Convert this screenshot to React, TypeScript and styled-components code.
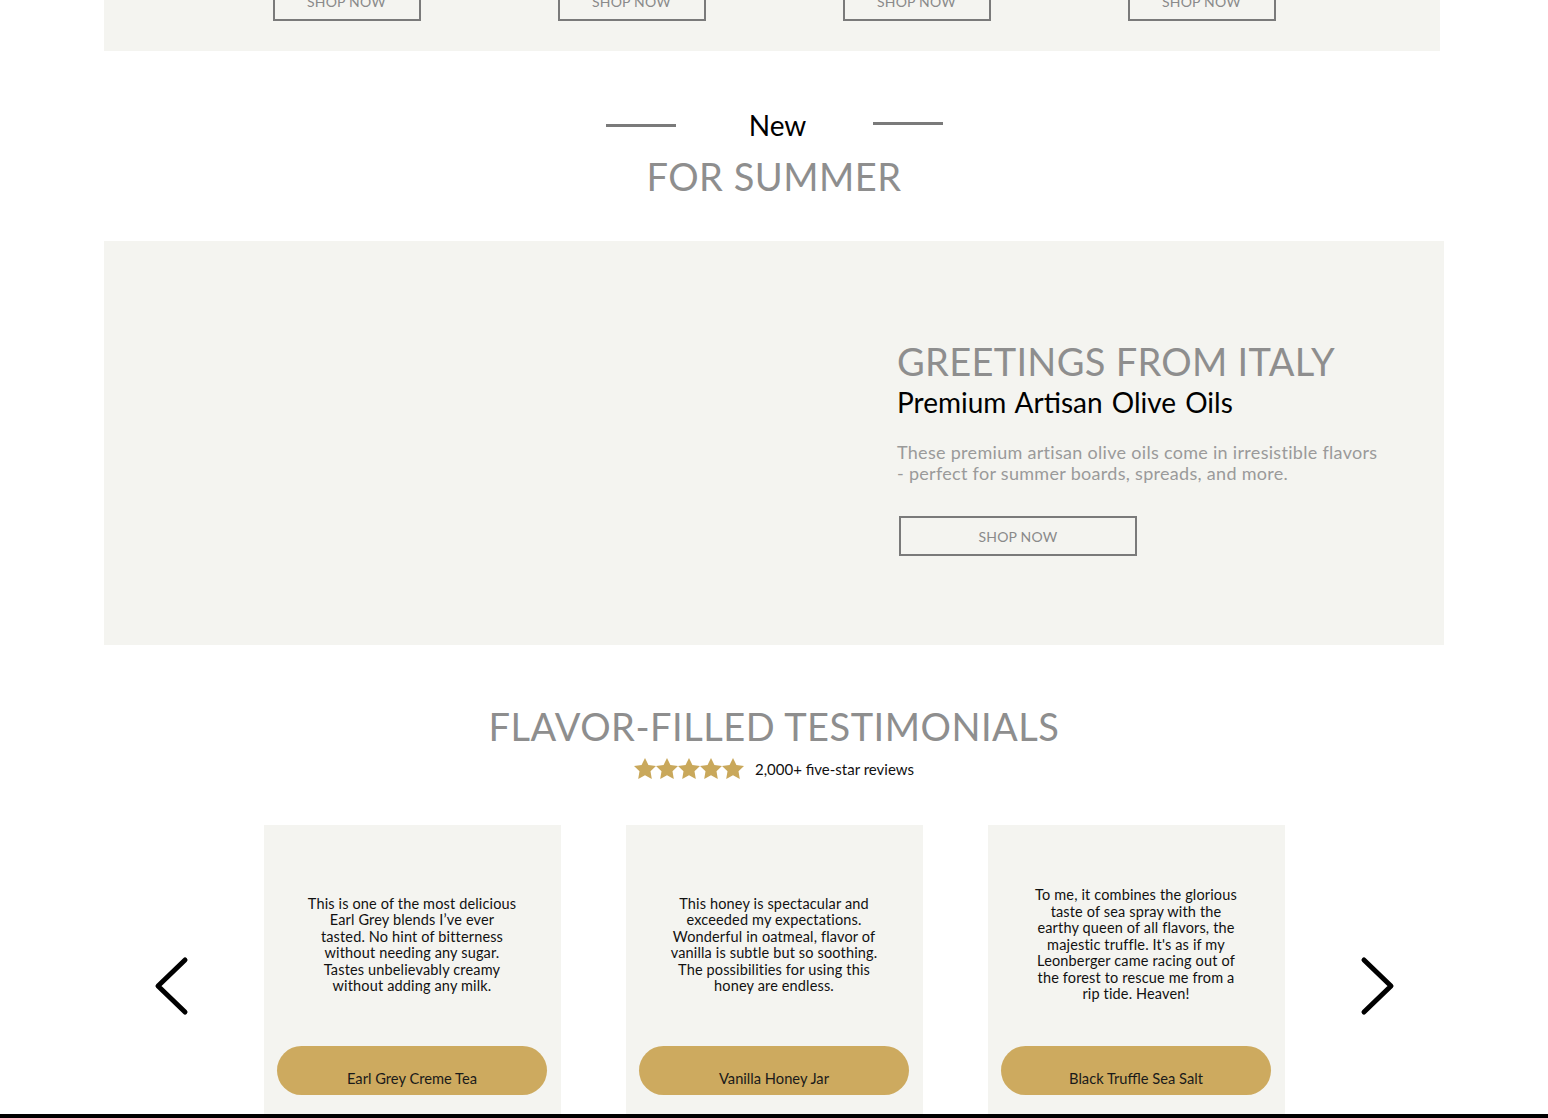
import styled, { createGlobalStyle } from "styled-components";

const GlobalStyle = createGlobalStyle`
  body {
    margin: 0;
    background: #ffffff;
    font-family: Lato, "Open Sans", sans-serif;
  }
`;

const Page = styled.div`
  width: 1548px;
  display: flex;
  flex-direction: column;
`;

const Faixa = styled.section`
  margin: 0 108px 0 104px;
  height: 51px;
  background: #f4f4f0;
  overflow: hidden;
  display: grid;
  grid-template-columns: repeat(4, 285px);
  justify-items: center;
  align-items: start;
  padding-left: 100px;
`;

const BotaoContorno = styled.button<{ $largura: number }>`
  width: ${(p) => p.$largura}px;
  height: 40px;
  background: transparent;
  border: 2px solid #7a7a7a;
  color: #8a8a8a;
  font-family: Lato, sans-serif;
  font-size: 14px;
  letter-spacing: 0.2px;
  cursor: pointer;
  padding: 0;
`;

const BotaoFaixa = styled(BotaoContorno)`
  margin-top: -19px;
`;

const Cabecalho = styled.div`
  margin-top: 57px;
  display: flex;
  flex-direction: column;
  align-items: center;
`;

const LinhaNovo = styled.div`
  display: flex;
  align-items: center;
  margin-left: 1px;
`;

const Traco = styled.span<{ $sobe?: boolean }>`
  width: 70px;
  height: 3px;
  background: #7a7a7a;
  transform: translateY(${(p) => (p.$sobe ? "-2px" : "0")});
`;

const Novo = styled.span`
  margin: 0 67px 0 73px;
  font-size: 28px;
  line-height: 34px;
  color: #000;
`;

const TituloCinza = styled.h2<{ $topo: number }>`
  margin: ${(p) => p.$topo}px 0 0 0;
  font-weight: 400;
  font-size: 38px;
  line-height: 46px;
  color: #8e8e8e;
  letter-spacing: 0.5px;
`;

const Banner = styled.section`
  margin: 42px 104px 0 104px;
  height: 404px;
  background: #f4f4f0;
  display: grid;
  grid-template-columns: 793px 1fr;
`;

const BannerTexto = styled.div`
  padding-top: 98px;
  display: flex;
  flex-direction: column;
  align-items: flex-start;
`;

const BannerTitulo = styled.h3`
  margin: 0;
  font-weight: 400;
  font-size: 38px;
  line-height: 44px;
  color: #8e8e8e;
  letter-spacing: 0.3px;
`;

const BannerSub = styled.h4`
  margin: 3px 0 0 0;
  font-weight: 400;
  font-size: 28px;
  line-height: 32px;
  color: #000;
  word-spacing: 2px;
`;

const BannerDesc = styled.p`
  margin: 24px 0 0 0;
  font-size: 18px;
  line-height: 21px;
  letter-spacing: 0.3px;
  color: #9a9a9a;
  width: 488px;
`;

const BannerBotao = styled(BotaoContorno)`
  margin: 32px 0 0 2px;
`;

const Depoimentos = styled.section`
  margin-top: 58px;
  display: flex;
  flex-direction: column;
  align-items: center;
`;

const Avaliacao = styled.div`
  margin-top: 9px;
  display: flex;
  align-items: center;
  gap: 11px;
  font-size: 15px;
  color: #111;
`;

const Estrelas = styled.div`
  display: flex;
`;

const Carrossel = styled.div`
  margin-top: 45px;
  display: flex;
  align-items: flex-start;
  gap: 75px;
`;

const Seta = styled.button`
  margin-top: 131px;
  background: none;
  border: 0;
  padding: 0;
  cursor: pointer;
  display: flex;
`;

const Cartoes = styled.div`
  display: flex;
  gap: 65px;
`;

const Cartao = styled.div`
  width: 297px;
  height: 289px;
  background: #f4f4f0;
  display: flex;
  flex-direction: column;
  align-items: center;
`;

const CartaoTexto = styled.p`
  margin: 20px 0 0 0;
  height: 200px;
  display: flex;
  align-items: center;
  text-align: center;
  font-size: 14.5px;
  line-height: 16.5px;
  letter-spacing: 0.15px;
  color: #111;
`;

const Pilula = styled.button`
  margin-top: 1px;
  width: 270px;
  height: 49px;
  border: 0;
  border-radius: 25px;
  background: #cdaa5f;
  color: #1a1a1a;
  font-family: Lato, sans-serif;
  font-size: 14.7px;
  line-height: 16.5px;
  padding: 24px 0 0 0;
  box-sizing: border-box;
  display: flex;
  justify-content: center;
  align-items: flex-start;
  cursor: pointer;
`;

const Rodape = styled.footer`
  height: 300px;
  background: #000;
`;

const Estrela = () => (
  <svg width="22" height="22" viewBox="2 2 20 20">
    <polygon
      fill="#c9a85b"
      points="12,2 15.09,8.26 22,9.27 17,14.14 18.18,21.02 12,17.77 5.82,21.02 7,14.14 2,9.27 8.91,8.26"
    />
  </svg>
);

const Chevron = ({ direita }: { direita?: boolean }) => (
  <svg width="36" height="60" viewBox="0 0 36 60">
    <path
      d={direita ? "M4 4 L31 30 L4 56" : "M32 4 L5 30 L32 56"}
      fill="none"
      stroke="#000"
      strokeWidth="5"
      strokeLinecap="round"
      strokeLinejoin="round"
    />
  </svg>
);

const depoimentos = [
  {
    linhas: [
      "This is one of the most delicious",
      "Earl Grey blends I’ve ever",
      "tasted. No hint of bitterness",
      "without needing any sugar.",
      "Tastes unbelievably creamy",
      "without adding any milk.",
    ],
    produto: "Earl Grey Creme Tea",
  },
  {
    linhas: [
      "This honey is spectacular and",
      "exceeded my expectations.",
      "Wonderful in oatmeal, flavor of",
      "vanilla is subtle but so soothing.",
      "The possibilities for using this",
      "honey are endless.",
    ],
    produto: "Vanilla Honey Jar",
  },
  {
    linhas: [
      "To me, it combines the glorious",
      "taste of sea spray with the",
      "earthy queen of all flavors, the",
      "majestic truffle. It's as if my",
      "Leonberger came racing out of",
      "the forest to rescue me from a",
      "rip tide. Heaven!",
    ],
    produto: "Black Truffle Sea Salt",
  },
];

export default function App() {
  return (
    <Page>
      <GlobalStyle />
      <Faixa>
        {[0, 1, 2, 3].map((i) => (
          <BotaoFaixa key={i} $largura={148}>
            SHOP NOW
          </BotaoFaixa>
        ))}
      </Faixa>

      <Cabecalho>
        <LinhaNovo>
          <Traco />
          <Novo>New</Novo>
          <Traco $sobe />
        </LinhaNovo>
        <TituloCinza $topo={11}>FOR SUMMER</TituloCinza>
      </Cabecalho>

      <Banner>
        <div />
        <BannerTexto>
          <BannerTitulo>GREETINGS FROM ITALY</BannerTitulo>
          <BannerSub>Premium Artisan Olive Oils</BannerSub>
          <BannerDesc>
            These premium artisan olive oils come in irresistible flavors - perfect for summer
            boards, spreads, and more.
          </BannerDesc>
          <BannerBotao $largura={238}>SHOP NOW</BannerBotao>
        </BannerTexto>
      </Banner>

      <Depoimentos>
        <TituloCinza $topo={0}>FLAVOR-FILLED TESTIMONIALS</TituloCinza>
        <Avaliacao>
          <Estrelas>
            {[0, 1, 2, 3, 4].map((i) => (
              <Estrela key={i} />
            ))}
          </Estrelas>
          <span>2,000+ five-star reviews</span>
        </Avaliacao>

        <Carrossel>
          <Seta aria-label="anterior">
            <Chevron />
          </Seta>
          <Cartoes>
            {depoimentos.map((d) => (
              <Cartao key={d.produto}>
                <CartaoTexto>
                  <span>
                    {d.linhas.map((l, i) => (
                      <span key={i}>
                        {l}
                        {i < d.linhas.length - 1 && <br />}
                      </span>
                    ))}
                  </span>
                </CartaoTexto>
                <Pilula>{d.produto}</Pilula>
              </Cartao>
            ))}
          </Cartoes>
          <Seta aria-label="próximo">
            <Chevron direita />
          </Seta>
        </Carrossel>
      </Depoimentos>
      <Rodape />
    </Page>
  );
}
